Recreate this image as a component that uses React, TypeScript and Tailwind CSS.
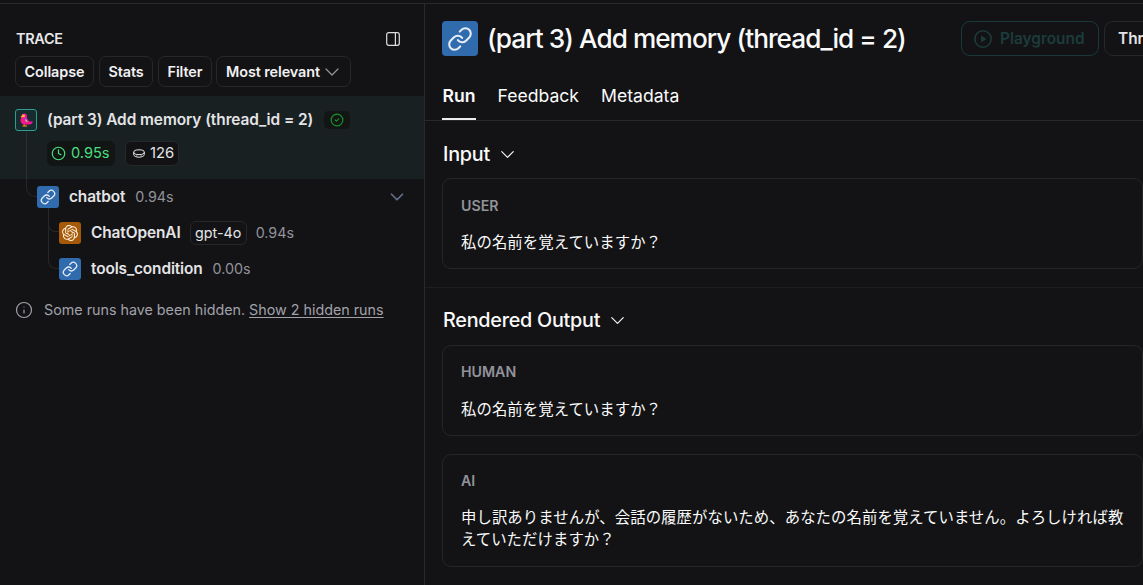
import React from "react";
import { ChevronDown, CircleCheck, Clock, Info, Link } from "lucide-react";
import { SiOpenai } from "react-icons/si";

function Parrot() {
  return (
    <svg viewBox="0 0 13 14" className="h-[14px] w-[13px] shrink-0">
      <path d="M1.400 3.400C1.400 1.300 2.800.4 4.300.4c1.700 0 2.700 1 2.700 2.500v2.300L9.300 8.600h3.500c0 1.800-1.800 2.900-3.600 2.900H4.500C2 11.500.4 9.300.6 7 .7 5.300 1.400 4.800 1.400 3.400z" fill="#fb1290" />
      <path d="M2 1.600h2.800v2.600H2z" fill="#fbb04c" />
      <path d="M1.900 2.400.3 4l1.700.5z" fill="#f59e0b" />
      <path d="M4.300 5c2.600 0 4 1.700 3.900 4.700C5.900 9.500 4.300 7.700 4.300 5z" fill="#7c45d8" />
      <path d="M5 6.200c1.500.3 2.300 1.300 2.500 3-1.500-.2-2.300-1.300-2.500-3z" fill="#f7b23b" />
      <path d="M3.600 11.500h1.300v1h2.200v1H2.600v-1h1z" fill="#f59e0b" />
    </svg>
  );
}

function Coins() {
  return (
    <svg viewBox="0 0 12 9" className="h-[9px] w-[12px] shrink-0" fill="none" stroke="#e4e4e7" strokeWidth="1">
      <ellipse cx="6" cy="3.200" rx="5.300" ry="2.400" />
      <path d="M.7 3.200v2.400C.7 7 3 8.200 6 8.200s5.300-1.200 5.300-2.600V3.200" />
      <path d="M3.800 5.600v2M8.200 5.600v2" strokeWidth=".6" />
    </svg>
  );
}

function ChainTile() {
  return (
    <span className="flex size-[22px] shrink-0 items-center justify-center rounded-[3px] bg-[#306bae]">
      <Link className="size-[16px] text-[#e6edf6]" strokeWidth={1.9} />
    </span>
  );
}

function Chip({ children, className }: { children: React.ReactNode; className: string }) {
  return <button className={`flex h-[31px] shrink-0 items-center rounded-[7px] border border-[#27272a] pt-px text-[14.400px] font-semibold tracking-[-0.080px] text-[#f1f1f3] ${className}`}>{children}</button>;
}

function Message({ role, text, className, textClassName }: { role: string; text: string; className: string; textClassName: string }) {
  return (
    <article className={`ml-[17px] w-[701px] rounded-[9px] border border-[#252528] px-[18px] ${className}`}>
      <h3 className="text-[14.200px] leading-[20px] font-semibold text-[#92929b]">{role}</h3>
      <p className={`-mr-[4px] text-[15.400px] leading-[22px] tracking-[0.060px] text-[#fafafa] ${textClassName}`}>{text}</p>
    </article>
  );
}

function SectionTitle({ children }: { children: string }) {
  return (
    <h2 className="ml-[18px] flex h-[28px] items-center gap-[6px] pt-[2px] text-[19.800px] font-medium tracking-[-0.250px] text-[#fafafa]">
      {children}
      <ChevronDown className="-mt-[2px] size-[23px]" strokeWidth={1.200} />
    </h2>
  );
}

function Sidebar() {
  return (
    <aside className="flex w-[425px] shrink-0 flex-col border-r border-[#29292c]">
      <header className="flex h-[52px] items-center justify-between pt-[18px] pr-[24px] pl-[16px]">
        <h2 className="text-[14.400px] font-semibold tracking-[-0.300px] text-[#e8e8ea]">TRACE</h2>
        <svg viewBox="0 0 14 14" className="size-[14px]" fill="none" stroke="#dedee1" strokeWidth="1.200">
          <rect x=".7" y=".7" width="12.600" height="12.600" rx="2" />
          <path d="M9.400.7v12.600" />
        </svg>
      </header>
      <div className="flex gap-[5px] pl-[15px]">
        <Chip className="w-[79px] justify-center">Collapse</Chip>
        <Chip className="w-[54px] justify-center">Stats</Chip>
        <Chip className="w-[54px] justify-center">Filter</Chip>
        <Chip className="-ml-px w-[135px] pl-[9px]">
          Most relevant
          <ChevronDown className="size-[24px] shrink-0 text-[#96969d]" strokeWidth={1.200} />
        </Chip>
      </div>
      <div className="mt-[9px] flex h-[83px] bg-[#182022] pl-[15px]">
        <div className="flex w-[22px] flex-col pt-[13px]">
          <span className="flex size-[22px] items-center justify-center rounded-[3px] border border-[#2d9c91] bg-[#162d30]"><Parrot /></span>
          <span className="ml-[11px] flex-1 border-l border-[#2a3032]" />
        </div>
        <div className="ml-[10px] pt-[13px]">
          <div className="flex h-[22px] items-center">
            <span className="text-[15.400px] font-semibold tracking-[-0.050px] text-[#e4e4e7]">(part 3) Add memory (thread_id = 2)</span>
            <span className="ml-[11px] flex h-[18px] w-[26px] items-center justify-center rounded-[5px] bg-[#121513]"><CircleCheck className="size-[14px] text-[#17952a]" strokeWidth={2} /></span>
          </div>
          <div className="mt-[10px] flex gap-[10px]">
            <span className="flex h-[25px] w-[68px] items-center gap-[5px] rounded-[6px] bg-[#111513] pl-[4px] text-[14.600px] text-[#4ade80]"><Clock className="size-[15px]" strokeWidth={1.900} />0.95s</span>
            <span className="flex h-[25px] w-[54px] items-center gap-[5px] rounded-[6px] border border-[#242829] bg-[#121214] pl-[7px] text-[14.800px] text-[#e4e4e7]"><Coins />126</span>
          </div>
        </div>
      </div>
      <div className="flex h-[36px] pl-[26px]">
        <span className="h-[18px] w-[11px] rounded-bl-[9px] border-b border-l border-[#27272a]" />
        <div className="flex flex-1 items-center">
          <ChainTile />
          <span className="ml-[10px] text-[15.400px] font-semibold tracking-[-0.120px] text-[#e4e4e7]">chatbot</span>
          <span className="ml-[10px] text-[14.300px] text-[#92929b]">0.94s</span>
          <ChevronDown className="mr-[16px] ml-auto size-[22px] text-[#64708a]" strokeWidth={1.900} />
        </div>
      </div>
      <div className="flex h-[36px] pl-[48px]">
        <span className="-mt-[7px] flex w-[11px] flex-col border-l border-[#27272a]"><span className="-ml-px h-[24px] rounded-bl-[7px] border-b border-l border-[#27272a]" /></span>
        <div className="flex items-center">
          <span className="-mt-px flex size-[22px] items-center justify-center rounded-[3px] bg-[#a65a09]"><SiOpenai className="size-[16px] text-[#fff0dc]" /></span>
          <span className="ml-[10px] text-[15.400px] font-semibold tracking-[-0.080px] text-[#e4e4e7]">ChatOpenAI</span>
          <span className="ml-[9px] flex h-[24px] w-[57px] items-center justify-center rounded-[6px] border border-[#27272a] text-[14.300px] text-[#e4e4e7]">gpt-4o</span>
          <span className="ml-[9px] text-[14.300px] text-[#92929b]">0.94s</span>
        </div>
      </div>
      <div className="flex h-[36px] pl-[48px]">
        <span className="h-[18px] w-[11px] rounded-bl-[8px] border-b border-l border-[#27272a]" />
        <div className="flex items-center">
          <ChainTile />
          <span className="ml-[10px] text-[15.400px] font-semibold tracking-[-0.120px] text-[#e4e4e7]">tools_condition</span>
          <span className="ml-[10px] text-[14.300px] text-[#92929b]">0.00s</span>
        </div>
      </div>
      <div className="mt-[12px] flex h-[22px] items-center pl-[15px] text-[14.300px] text-[#a1a1aa]">
        <Info className="mr-[11px] size-[18px]" strokeWidth={1.600} />
        <span>Some runs have been hidden. <span className="underline underline-offset-2">Show 2 hidden runs</span></span>
      </div>
    </aside>
  );
}

export default function App() {
  return (
    <div className="flex h-[585px] w-[1143px] flex-col overflow-hidden bg-[#131315] pt-[3px] font-['Inter','Noto_Sans_CJK_JP',sans-serif]">
      <div className="flex flex-1 border-t border-[#29292c]">
        <Sidebar />
        <main className="flex w-[718px] shrink-0 flex-col">
          <header className="flex h-[52px] items-center pt-[17px] pl-[17px]">
            <span className="flex h-[35px] w-[36px] shrink-0 items-center justify-center rounded-[4px] bg-[#306bae]"><Link className="size-[26px] text-[#e6edf6]" strokeWidth={1.900} /></span>
            <h1 className="ml-[9px] w-[474px] shrink-0 pt-px text-[26.200px] font-medium tracking-[-0.960px] whitespace-nowrap text-[#fafafa]">(part 3) Add memory (thread_id = 2)</h1>
            <button className="flex h-[35px] w-[138px] shrink-0 items-center gap-[8px] rounded-[9px] border border-[#19393a] pl-[12px] text-[15.400px] font-semibold text-[#1c3c3c]">
              <svg viewBox="0 0 18 18" className="size-[18px]" fill="none" stroke="currentColor" strokeWidth="1.600"><circle cx="9" cy="9" r="8.200" /><path d="m7 5.500 5.500 3.500L7 12.500z" fill="currentColor" stroke="none" /></svg>
              Playground
            </button>
            <button className="-mr-[60px] ml-[5px] flex h-[35px] w-[100px] shrink-0 items-center rounded-[9px] border border-[#27272a] pl-[13px] text-[15.400px] font-semibold text-[#e4e4e7]">Thread</button>
          </header>
          <nav className="flex h-[65px] items-end border-b border-[#29292c] pl-[17px] text-[17.600px] text-[#fafafa]">
            <span className="flex h-[48px] w-[34px] items-center justify-center border-b-2 border-[#ececee] pt-[2px] font-semibold">Run</span>
            <span className="ml-[21.500px] flex h-[48px] items-center">Feedback</span>
            <span className="ml-[22px] flex h-[48px] items-center">Metadata</span>
          </nav>
          <section className="h-[167px] border-b border-[#1e1e20] pt-[19px]">
            <SectionTitle>Input</SectionTitle>
            <Message className="mt-[10px] h-[91px] pt-[17px]" textClassName="mt-[16px]" role="USER" text="私の名前を覚えていますか？" />
          </section>
          <section className="pt-[18px]">
            <SectionTitle>Rendered Output</SectionTitle>
            <Message className="mt-[11px] h-[91px] pt-[16px]" textClassName="mt-[17px]" role="HUMAN" text="私の名前を覚えていますか？" />
            <Message className="mt-[18px] h-[113px] pt-[16px]" textClassName="mt-[16px]" role="AI" text="申し訳ありませんが、会話の履歴がないため、あなたの名前を覚えていません。よろしければ教えていただけますか？" />
          </section>
        </main>
      </div>
    </div>
  );
}
